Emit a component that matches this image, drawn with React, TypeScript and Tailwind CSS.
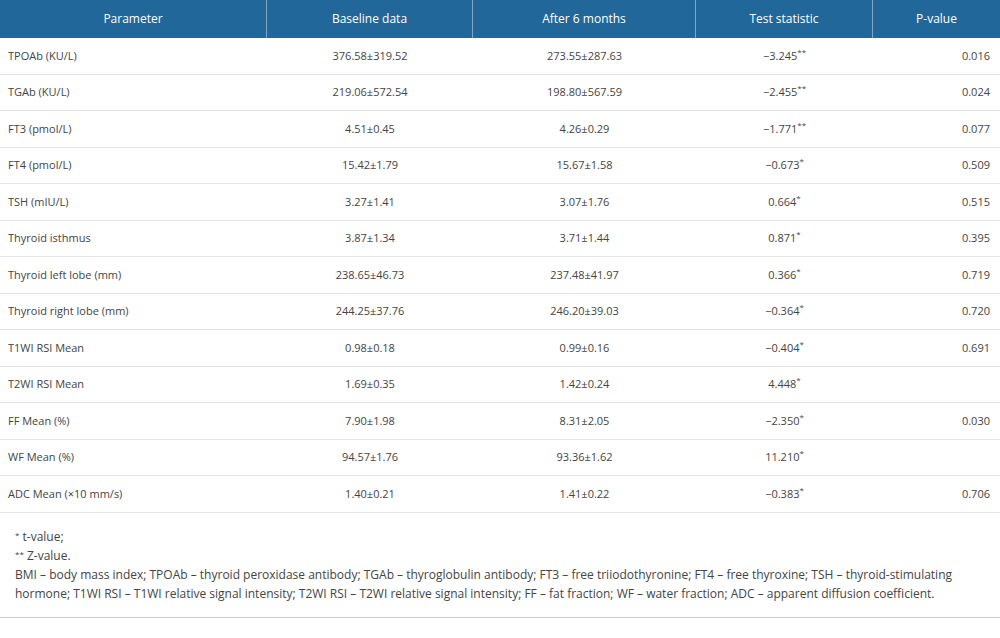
const rows: [string,string,string,string,string,string][] = [
["TPOAb (KU/L)","376.58±319.52","273.55±287.63","−3.245","**","0.016"],
["TGAb (KU/L)","219.06±572.54","198.80±567.59","−2.455","**","0.024"],
["FT3 (pmol/L)","4.51±0.45","4.26±0.29","−1.771","**","0.077"],
["FT4 (pmol/L)","15.42±1.79","15.67±1.58","−0.673","*","0.509"],
["TSH (mIU/L)","3.27±1.41","3.07±1.76","0.664","*","0.515"],
["Thyroid isthmus","3.87±1.34","3.71±1.44","0.871","*","0.395"],
["Thyroid left lobe (mm)","238.65±46.73","237.48±41.97","0.366","*","0.719"],
["Thyroid right lobe (mm)","244.25±37.76","246.20±39.03","−0.364","*","0.720"],
["T1WI RSI Mean","0.98±0.18","0.99±0.16","−0.404","*","0.691"],
["T2WI RSI Mean","1.69±0.35","1.42±0.24","4.448","*",""],
["FF Mean (%)","7.90±1.98","8.31±2.05","−2.350","*","0.030"],
["WF Mean (%)","94.57±1.76","93.36±1.62","11.210","*",""],
["ADC Mean (×10 mm/s)","1.40±0.21","1.41±0.22","−0.383","*","0.706"],
];
const Sup = ({s}:{s:string}) => <span className="text-[8px] align-top relative -top-[2px]">{s}</span>;
export default function App(){
  return (
    <div className="w-[1000px] h-[638px] bg-white text-[#444] text-[11px] overflow-hidden" style={{fontFamily:'"Open Sans", sans-serif'}}>
      <div className="grid grid-cols-[267px_206px_223px_177px_127px] h-[38px] bg-[#22679a] text-white text-[12px]">
        {["Parameter","Baseline data","After 6 months","Test statistic","P-value"].map((h,i)=>(
          <div key={h} className={`flex items-center justify-center ${i<4?"border-r border-[#7fa8c8]":""}`}>{h}</div>
        ))}
      </div>
      {rows.map(r=>(
        <div key={r[0]} className="grid grid-cols-[267px_206px_223px_177px_127px] h-[36.5px] items-center border-b border-[#e4e4e4]">
          <div className="pl-[8px]">{r[0]}</div>
          <div className="text-center">{r[1]}</div>
          <div className="text-center">{r[2]}</div>
          <div className="text-center">{r[3]}<Sup s={r[4]}/></div>
          <div className="text-right pr-[10px]">{r[5]}</div>
        </div>
      ))}
      <div className="px-[15px] pt-[14px] pb-[14px] leading-[19px] text-[12px] border-b border-[#ccc]">
        <div><Sup s="*"/> t-value;</div>
        <div><Sup s="**"/> Z-value.</div>
        <div>BMI – body mass index; TPOAb – thyroid peroxidase antibody; TGAb – thyroglobulin antibody; FT3 – free triiodothyronine; FT4 – free thyroxine; TSH – thyroid-stimulating hormone; T1WI RSI – T1WI relative signal intensity; T2WI RSI – T2WI relative signal intensity; FF – fat fraction; WF – water fraction; ADC – apparent diffusion coefficient.</div>
      </div>
    </div>
  );
}
